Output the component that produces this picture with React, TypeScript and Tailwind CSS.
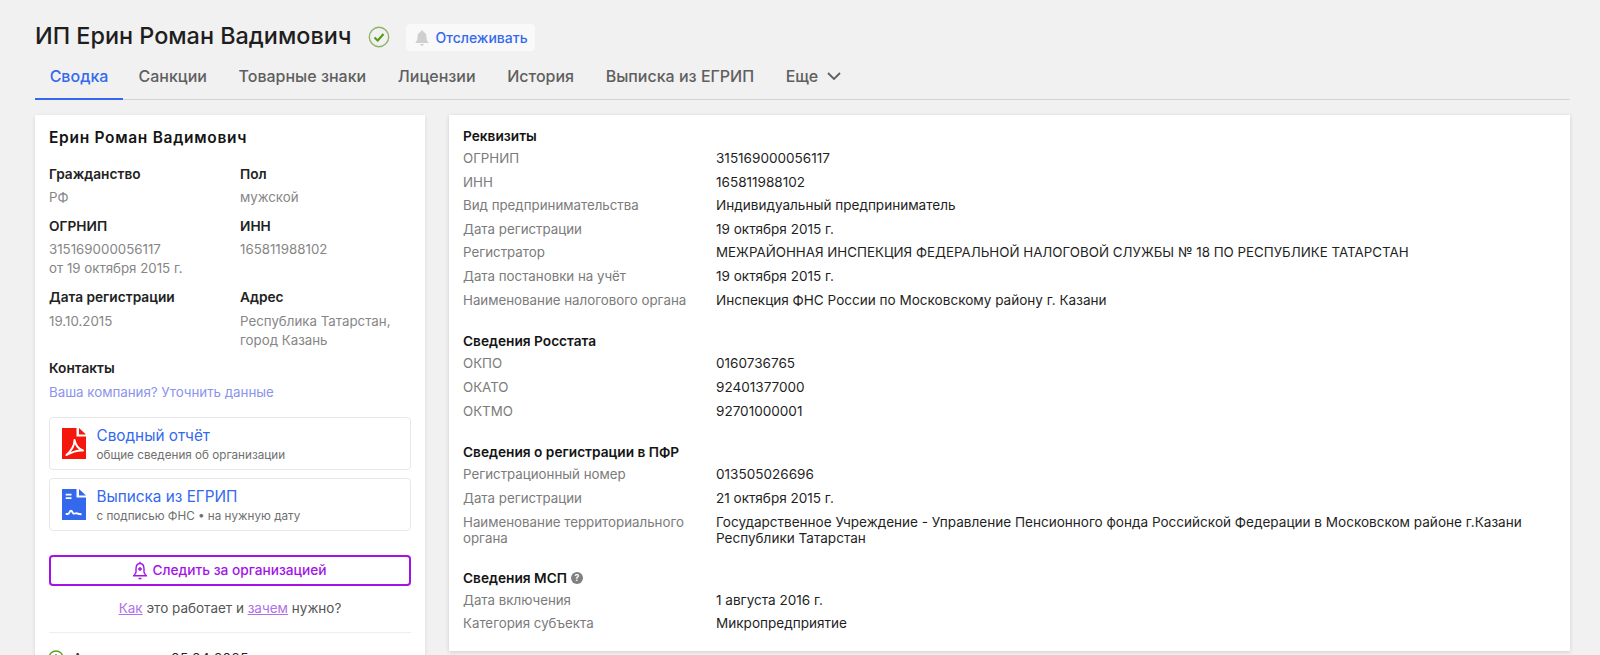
import React from "react";

const font = { fontFamily: "Inter, 'Noto Sans', sans-serif" };

function Row({ k, v, h = "h-[23.6px]", vc = "text-[13.55px]" }: { k: React.ReactNode; v: React.ReactNode; h?: string; vc?: string }) {
  return (
    <div className={`flex ${h} items-start text-[13.3px] leading-[16px]`}>
      <div className="w-[253px] shrink-0 text-[#7b7b7b]">{k}</div>
      <div className={`flex-1 text-[#1f1f1f] ${vc}`}>{v}</div>
    </div>
  );
}

function Head({ children }: { children: React.ReactNode }) {
  return <div className="text-[13.7px] leading-[16px] font-semibold text-[#141414] h-[20px] mb-[4px] flex items-center gap-[4px]">{children}</div>;
}

function Info({ label, children, className = "" }: { label: string; children: React.ReactNode; className?: string }) {
  return (
    <div className={className}>
      <div className="text-[13.7px] leading-[16px] font-semibold text-[#222]">{label}</div>
      <div className="mt-[6.5px] text-[13.3px] leading-[19px] text-[#868686]">{children}</div>
    </div>
  );
}

function Pdf() {
  return (
    <svg width="24" height="31" viewBox="0 0 24 31">
      <path d="M0 0H14.5V8.5H24V31H0Z" fill="#f5170c" />
      <path d="M17 0V6.5H24Z" fill="#f5170c" />
      <path d="M12.5 12C12.5 17 9 23 4.5 27C9 24.5 15 22 21 22.5C16.5 21 13.5 17 12.5 12Z" fill="none" stroke="#fff" strokeWidth="2" strokeLinejoin="round" />
    </svg>
  );
}

function Doc() {
  return (
    <svg width="24" height="31" viewBox="0 0 24 31">
      <path d="M0 0H14.5V8.5H24V31H0Z" fill="#3469ee" />
      <path d="M17 0V6.5H24Z" fill="#3469ee" />
      <path d="M3.7 5.7H9.5M3.7 9.2H9.5" stroke="#fff" strokeWidth="1.8" />
      <path d="M3.7 25H6C7.5 25 7.5 21.8 9 21.8C10.5 21.8 10.5 24.6 12 24.6C13.5 24.6 14 24 15 24.3C16 24.8 17 25.2 19.5 25.2" fill="none" stroke="#fff" strokeWidth="1.9" />
    </svg>
  );
}

function LinkCard({ icon, title, sub }: { icon: React.ReactNode; title: string; sub: string }) {
  return (
    <div className="h-[53px] border border-[#e8e8e8] rounded-[4px] flex items-center pl-[12px] gap-[10.5px]">
      {icon}
      <div className="pt-[3px]">
        <div className="text-[15.3px] leading-[20px] text-[#3469ee]">{title}</div>
        <div className="text-[11.7px] leading-[18px] text-[#6f6f6f]">{sub}</div>
      </div>
    </div>
  );
}

export default function App() {
  const tabs = ["Санкции", "Товарные знаки", "Лицензии", "История", "Выписка из ЕГРИП"];
  return (
    <div style={font} className="h-[655px] w-[1600px] overflow-hidden bg-[#f1f1f1] pl-[35px] pr-[30px]">
      <div className="h-[51px] pt-[23px] flex items-start">
        <h1 className="text-[23.4px] leading-[26px] font-medium text-[#1e1e1e]">ИП Ерин Роман Вадимович</h1>
        <svg className="ml-[17px] mt-[3px]" width="22" height="22" viewBox="0 0 22 22">
          <circle cx="11" cy="11" r="9.7" fill="none" stroke="#8fb56b" strokeWidth="1.4" />
          <path d="M6.5 11.5L9.7 14.5L15.5 8" fill="none" stroke="#4f9a12" strokeWidth="2" />
        </svg>
        <div className="ml-[16px] mt-[1px] h-[27px] w-[129px] bg-[#f9f9f9] rounded-[4px] flex items-center pl-[9px] gap-[6px]">
          <svg width="14" height="16" viewBox="0 0 14 16">
            <path d="M7 0.5C8 0.5 8.4 1 8.4 2C10.7 2.6 11.5 4.5 11.5 7C11.5 9.5 12 11 13.5 12.5V13H0.5V12.5C2 11 2.5 9.5 2.5 7C2.5 4.5 3.3 2.6 5.6 2C5.6 1 6 0.5 7 0.5ZM5.2 14H8.8C8.8 15 8 15.7 7 15.7C6 15.7 5.2 15 5.2 14Z" fill="#cfcfcf" />
          </svg>
          <span className="text-[14px] font-medium text-[#3469ee]">Отслеживать</span>
        </div>
      </div>
      <div className="h-[49px] border-b border-[#d4d4d4] flex text-[16px] leading-[20px] font-medium text-[#5f5f5f]">
        <div className="w-[88px] h-[49px] border-b-2 border-[#3469ee] pt-[15px] text-center text-[#3469ee]">Сводка</div>
        <div className="flex pt-[15px] pl-[15.5px] gap-[31.6px]">
          {tabs.map((t) => (
            <span key={t}>{t}</span>
          ))}
          <span className="flex items-start gap-[8px]">
            Еще
            <svg className="mt-[2px]" width="16" height="16" viewBox="0 0 16 16">
              <path d="M2 5L8 11L14 5" fill="none" stroke="#5f5f5f" strokeWidth="1.8" />
            </svg>
          </span>
        </div>
      </div>
      <div className="flex items-start gap-[24px] mt-[15px]">
        <aside className="w-[390px] h-[600px] shrink-0 bg-white shadow-[0_1px_4px_rgba(0,0,0,0.1)] px-[14px] pt-[14px]">
          <div className="text-[15.5px] leading-[17px] tracking-[0.7px] font-semibold text-[#141414]">Ерин Роман Вадимович</div>
          <div className="grid grid-cols-[191px_1fr] mt-[19.5px]">
            <Info label="Гражданство" className="h-[52px]">РФ</Info>
            <Info label="Пол" className="h-[52px]">мужской</Info>
            <Info label="ОГРНИП" className="h-[71.5px]">315169000056117<br />от 19 октября 2015 г.</Info>
            <Info label="ИНН" className="h-[71.5px]">165811988102</Info>
            <Info label="Дата регистрации" className="h-[70.5px]">19.10.2015</Info>
            <Info label="Адрес" className="h-[70.5px]">Республика Татарстан,<br />город Казань</Info>
          </div>
          <div className="text-[13.7px] leading-[16px] font-semibold text-[#222]">Контакты</div>
          <div className="mt-[7px] text-[13.3px] leading-[19px] text-[#8a93ee]">Ваша компания? Уточнить данные</div>
          <div className="mt-[15px] flex flex-col gap-[8px]">
            <LinkCard icon={<Pdf />} title="Сводный отчёт" sub="общие сведения об организации" />
            <LinkCard icon={<Doc />} title="Выписка из ЕГРИП" sub="с подписью ФНС • на нужную дату" />
          </div>
          <div className="mt-[24px] h-[31px] border-2 border-[#a313e8] rounded-[4px] flex items-center justify-center gap-[5px] text-[13.7px] font-medium text-[#a313e8]">
            <svg width="14" height="19" viewBox="0 0 14 19">
              <path d="M7 0.7V2.5M7 2.5C10 2.5 11 5 11 8V11C11 12.5 12.5 13.5 13.3 14.7H0.7C1.5 13.5 3 12.5 3 11V8C3 5 4 2.5 7 2.5ZM5.5 17.5H8.5" fill="none" stroke="#a313e8" strokeWidth="1.4" />
              <path d="M7 6V10M5 8H9" stroke="#a313e8" strokeWidth="1.4" />
            </svg>
            Следить за организацией
          </div>
          <div className="mt-[13px] text-center text-[13.5px] leading-[18px] text-[#555]">
            <span className="text-[#b070e8] underline">Как</span> это работает и <span className="text-[#b070e8] underline">зачем</span> нужно?
          </div>
          <div className="mt-[15px] border-t border-[#eeeeee]" />
          <div className="mt-[17px] -ml-[1px] flex items-center gap-[9px] text-[13.5px] leading-[16px] text-[#222]">
            <svg width="16" height="16" viewBox="0 0 16 16">
              <circle cx="8" cy="8" r="7" fill="none" stroke="#5da02a" strokeWidth="1.4" />
              <path d="M8 4V9" stroke="#5da02a" strokeWidth="1.4" />
            </svg>
            <span className="tracking-[0.4px]">Актуально на 05.04.2025</span>
          </div>
        </aside>
        <main className="w-[1121px] h-[536px] bg-white shadow-[0_1px_4px_rgba(0,0,0,0.15)] pl-[14px] pt-[11px]">
          <Head>Реквизиты</Head>
          <Row k="ОГРНИП" v="315169000056117" />
          <Row k="ИНН" v="165811988102" />
          <Row k="Вид предпринимательства" v="Индивидуальный предприниматель" />
          <Row k="Дата регистрации" v="19 октября 2015 г." />
          <Row k="Регистратор" vc="text-[13.35px]" v="МЕЖРАЙОННАЯ ИНСПЕКЦИЯ ФЕДЕРАЛЬНОЙ НАЛОГОВОЙ СЛУЖБЫ № 18 ПО РЕСПУБЛИКЕ ТАТАРСТАН" />
          <Row k="Дата постановки на учёт" v="19 октября 2015 г." />
          <Row k="Наименование налогового органа" v="Инспекция ФНС России по Московскому району г. Казани" />
          <div className="h-[16.2px]" />
          <Head>Сведения Росстата</Head>
          <Row k="ОКПО" v="0160736765" />
          <Row k="ОКАТО" v="92401377000" />
          <Row k="ОКТМО" v="92701000001" />
          <div className="h-[16.2px]" />
          <Head>Сведения о регистрации в ПФР</Head>
          <Row k="Регистрационный номер" v="013505026696" />
          <Row k="Дата регистрации" v="21 октября 2015 г." />
          <Row
            h="h-[54px]"
            k={<>Наименование территориального<br />органа</>}
            v={<>Государственное Учреждение - Управление Пенсионного фонда Российской Федерации в Московском районе г.Казани<br />Республики Татарстан</>}
          />
          <Head>
            Сведения МСП
            <svg width="12" height="12" viewBox="0 0 12 12">
              <circle cx="6" cy="6" r="6" fill="#808080" />
              <text x="6" y="9" textAnchor="middle" fontSize="8.5" fontWeight="700" fill="#fff">?</text>
            </svg>
          </Head>
          <Row k="Дата включения" v="1 августа 2016 г." />
          <Row k="Категория субъекта" v="Микропредприятие" />
        </main>
      </div>
    </div>
  );
}
